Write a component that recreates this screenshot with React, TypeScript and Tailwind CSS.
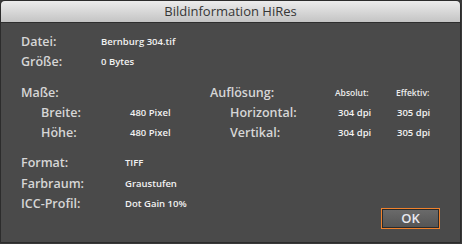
const labelFont = "font-['Open_Sans','Liberation_Sans',sans-serif]";

function Label({ text, indent = false }: { text: string; indent?: boolean }) {
  return (
    <span className={`text-[12.5px] font-semibold text-[#d6d6d6] ${indent ? "pl-[20px]" : ""}`}>
      {text}
    </span>
  );
}

function Value({ text }: { text: string }) {
  return <span className="text-[9.5px] font-semibold text-[#f2f2f2]">{text}</span>;
}

function Row({ label, value, valueX, indent }: { label: string; value: string; valueX: string; indent?: boolean }) {
  return (
    <div className={`grid h-5 items-center ${valueX}`}>
      <Label text={label} indent={indent} />
      <Value text={value} />
    </div>
  );
}

export default function App() {
  return (
    <div className={`h-[244px] w-[462px] bg-[#3a3a3a] ${labelFont}`}>
      <div className="flex h-[243px] w-[461px] flex-col overflow-hidden rounded-t-[5px] border border-[#2c2c2c] bg-[#4a4a4a]">
        <div className="flex h-[22px] items-center justify-center border-b border-[#2e2e2e] bg-gradient-to-b from-[#ececec] to-[#c4c4c4]">
          <span className="text-[13px] font-medium text-[#363636]">Bildinformation HiRes</span>
        </div>

        <div className="flex flex-1 flex-col pl-[20px] pr-[20px] pt-[9px]">
          <Row label="Datei:" value="Bernburg 304.tif" valueX="grid-cols-[80px_1fr]" />
          <Row label="Größe:" value="0 Bytes" valueX="grid-cols-[80px_1fr]" />

          <div className="mt-[11px] grid grid-cols-[189px_1fr]">
            <div className="flex flex-col">
              <div className="flex h-5 items-center">
                <Label text="Maße:" />
              </div>
              <Row label="Breite:" value="480 Pixel" valueX="grid-cols-[109px_1fr]" indent />
              <Row label="Höhe:" value="480 Pixel" valueX="grid-cols-[109px_1fr]" indent />
            </div>
            <div className="flex flex-col">
              <div className="grid h-5 grid-cols-[125px_61px_1fr] items-center">
                <Label text="Auflösung:" />
                <span className="text-[8.5px] font-semibold text-[#ececec]">Absolut:</span>
                <span className="text-[8.5px] font-semibold text-[#ececec]">Effektiv:</span>
              </div>
              <div className="grid h-5 grid-cols-[128px_59px_1fr] items-center">
                <Label text="Horizontal:" indent />
                <Value text="304 dpi" />
                <Value text="305 dpi" />
              </div>
              <div className="grid h-5 grid-cols-[128px_59px_1fr] items-center">
                <Label text="Vertikal:" indent />
                <Value text="304 dpi" />
                <Value text="305 dpi" />
              </div>
            </div>
          </div>

          <div className="mt-[10px] flex items-start justify-between">
            <div className="flex flex-col">
              <Row label="Format:" value="TIFF" valueX="grid-cols-[104px_1fr]" />
              <div className="h-px" />
              <Row label="Farbraum:" value="Graustufen" valueX="grid-cols-[104px_1fr]" />
              <Row label="ICC-Profil:" value="Dot Gain 10%" valueX="grid-cols-[104px_1fr]" />
            </div>
            <button className="mt-[55px] flex h-[21px] w-[59px] items-center justify-center border border-[#f0822d] bg-[#2a2a2a] p-px">
              <span className="flex h-full w-full items-center justify-center bg-gradient-to-b from-[#6a6a6a] to-[#555555] text-[13px] font-semibold text-[#e8e8f0]">
                OK
              </span>
            </button>
          </div>
        </div>
      </div>
    </div>
  );
}
